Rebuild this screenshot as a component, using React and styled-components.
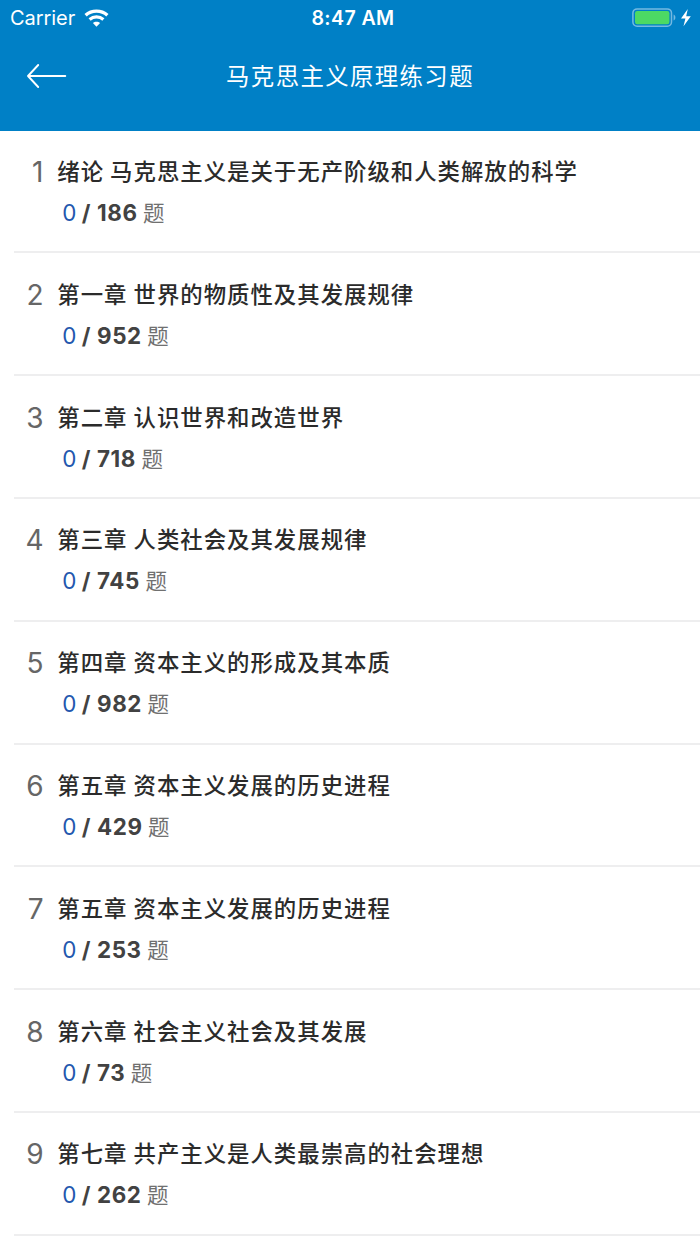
import React from 'react';
import styled, { createGlobalStyle } from 'styled-components';

const GlobalStyle = createGlobalStyle`
  * { box-sizing: border-box; }
  body {
    margin: 0;
    background: #fff;
    font-family: Inter, "Noto Sans CJK SC", sans-serif;
    overflow: hidden;
  }
`;

const Screen = styled.div`
  width: 700px;
  height: 1244px;
  overflow: hidden;
  background: #fff;
`;

const Header = styled.header`
  height: 130.7px;
  background: #0080c6;
  color: #fff;
`;

const StatusBar = styled.div`
  height: 35px;
  display: grid;
  grid-template-columns: 1fr auto 1fr;
  align-items: center;
  padding: 0 8px 0 10px;
`;

const Carrier = styled.div`
  display: flex;
  align-items: center;
  gap: 9px;
  font-size: 20px;
  line-height: 36px;
  letter-spacing: -0.05px;
`;

const Clock = styled.div`
  font-size: 19.6px;
  font-weight: 600;
  line-height: 36px;
  letter-spacing: 0.4px;
  padding-left: 4px;
`;

const Power = styled.div`
  display: flex;
  justify-content: flex-end;
`;

const NavBar = styled.div`
  height: 81px;
  display: grid;
  grid-template-columns: 1fr auto 1fr;
  align-items: center;
  padding: 0 26px;
`;

const BackButton = styled.button`
  width: 42px;
  height: 30px;
  padding: 0;
  border: 0;
  background: none;
  color: inherit;
`;

const NavTitle = styled.h1`
  margin: 0;
  padding-bottom: 1px;
  font: 400 23.4px/36px "Noto Sans CJK SC", sans-serif;
  letter-spacing: 1.4px;
`;

const List = styled.ul`
  list-style: none;
  margin: 0;
  padding: 0 0 0 14px;
`;

const Row = styled.li`
  height: 122.8px;
  display: flex;
  padding-top: 23.3px;
  border-bottom: 2px solid #eeeeef;
`;

const Index = styled.span`
  width: 29.5px;
  text-align: right;
  font-size: 28px;
  font-weight: 400;
  line-height: 37px;
  color: #666;
`;

const Detail = styled.div`
  padding-left: 13.8px;
`;

const Title = styled.h2`
  margin: 0;
  font: 500 22.4px/33px "Noto Sans CJK SC", sans-serif;
  letter-spacing: 1px;
  color: #2b2b2b;
  white-space: nowrap;
`;

const Progress = styled.div`
  display: flex;
  align-items: baseline;
  margin-top: 8px;
  padding-left: 5px;
  line-height: 34px;
  font-size: 22.4px;
`;

const Done = styled.span`
  color: #2357ae;
  width: 19.5px;
`;

const Total = styled.b`
  font-weight: 700;
  color: #424242;
  letter-spacing: 0.6px;
`;

const Unit = styled.span`
  margin-left: 5.5px;
  font: 400 21.5px/34px "Noto Sans CJK SC", sans-serif;
  color: #707070;
`;

const WifiIcon = () => (
  <svg width="25" height="18" viewBox="0 0 25 18" fill="none" stroke="currentColor">
    <path d="M1.6 6.2C7.7.8 17.3.8 23.4 6.2" strokeWidth="3.4" />
    <path d="M5.6 10.5C9.6 7.1 15.4 7.1 19.4 10.5" strokeWidth="3.2" />
    <path d="M8.9 14.1C10.9 12.2 14.1 12.2 16.1 14.1L12.5 17.7Z" fill="currentColor" stroke="none" />
  </svg>
);

const BatteryIcon = () => (
  <svg width="60" height="20" viewBox="0 0 60 20">
    <rect x="0.9" y="0.9" width="38.6" height="17.4" rx="4.2" fill="none" stroke="#74b9e1" strokeWidth="1.5" />
    <rect x="3" y="3" width="34.4" height="13.2" rx="2.2" fill="#4cd964" />
    <path d="M41.6 6.6C44 7.5 44 11.7 41.6 12.6Z" fill="#74b9e1" />
    <path d="M55.8 1.1L49 10.5H53.4L51.5 18.3L58.8 8.2H54.2Z" fill="#fff" />
  </svg>
);

const BackIcon = () => (
  <svg width="42" height="30" viewBox="0 0 42 30" fill="none" stroke="currentColor" strokeWidth="1.9" strokeLinecap="round" strokeLinejoin="round">
    <path d="M12.2 4L2 15L12.2 26M2 15H39.3" />
  </svg>
);

const chapters = [
  ['绪论 马克思主义是关于无产阶级和人类解放的科学', 186],
  ['第一章 世界的物质性及其发展规律', 952],
  ['第二章 认识世界和改造世界', 718],
  ['第三章 人类社会及其发展规律', 745],
  ['第四章 资本主义的形成及其本质', 982],
  ['第五章 资本主义发展的历史进程', 429],
  ['第五章 资本主义发展的历史进程', 253],
  ['第六章 社会主义社会及其发展', 73],
  ['第七章 共产主义是人类最崇高的社会理想', 262],
];

export default function App() {
  return (
    <Screen>
      <GlobalStyle />
      <Header>
        <StatusBar>
          <Carrier>Carrier <WifiIcon /></Carrier>
          <Clock>8:47 AM</Clock>
          <Power><BatteryIcon /></Power>
        </StatusBar>
        <NavBar>
          <BackButton aria-label="返回"><BackIcon /></BackButton>
          <NavTitle>马克思主义原理练习题</NavTitle>
        </NavBar>
      </Header>
      <List>
        {chapters.map(([title, total], i) => (
          <Row key={i}>
            <Index>{i + 1}</Index>
            <Detail>
              <Title>{title}</Title>
              <Progress>
                <Done>0</Done>
                <Total>/ {total}</Total>
                <Unit>题</Unit>
              </Progress>
            </Detail>
          </Row>
        ))}
      </List>
    </Screen>
  );
}
